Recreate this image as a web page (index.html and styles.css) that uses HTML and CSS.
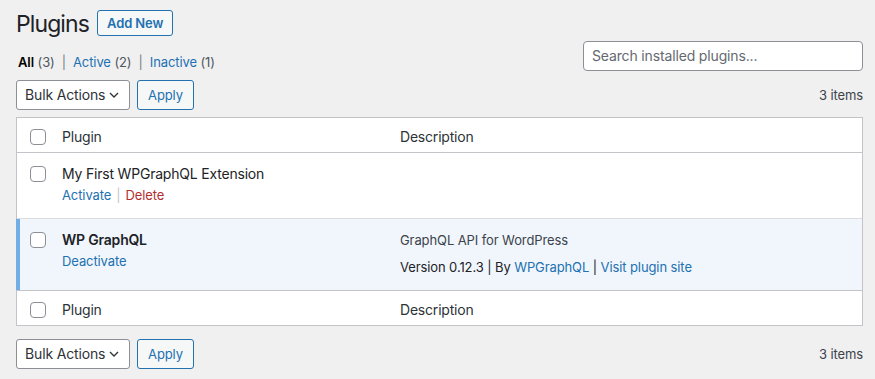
FILE: index.html
```html
<!DOCTYPE html>
<html lang="en">
<head>
    <meta charset="UTF-8">
    <meta name="viewport" content="width=device-width, initial-scale=1.0">
    <title>Plugins</title>
    <link rel="stylesheet" href="styles.css">
</head>
<body>
    <div class="wrap">
        <div class="page-head">
            <h1 class="page-title">Plugins</h1>
            <a class="title-action" href="#">Add New</a>
        </div>

        <div class="filter-bar">
            <ul class="subsubsub">
                <li><span class="current">All</span> <span class="count">(3)</span></li>
                <li class="sep">|</li>
                <li><a href="#">Active</a> <span class="count">(2)</span></li>
                <li class="sep">|</li>
                <li><a href="#">Inactive</a> <span class="count">(1)</span></li>
            </ul>
            <div class="search-box">Search installed plugins...</div>
        </div>

        <div class="tablenav">
            <div class="bulk">
                <div class="select">
                    <span>Bulk Actions</span>
                    <svg width="10" height="6" viewBox="0 0 10 6"><polyline points="1,1 5,5 9,1" fill="none" stroke="#2c3338" stroke-width="1.3"/></svg>
                </div>
                <button class="button">Apply</button>
            </div>
            <div class="num-items">3 items</div>
        </div>

        <div class="plugin-table">
            <div class="row head">
                <div class="check"><span class="checkbox"></span></div>
                <div class="col">Plugin</div>
                <div class="col">Description</div>
            </div>

            <div class="row plugin inactive">
                <div class="check"><span class="checkbox"></span></div>
                <div class="col title">
                    <div class="name">My First WPGraphQL Extension</div>
                    <div class="row-actions">
                        <a href="#">Activate</a><span class="bar">|</span><a class="delete" href="#">Delete</a>
                    </div>
                </div>
                <div class="col desc"></div>
            </div>

            <div class="row plugin active">
                <div class="check"><span class="checkbox"></span></div>
                <div class="col title">
                    <div class="name">WP GraphQL</div>
                    <div class="row-actions">
                        <a href="#">Deactivate</a>
                    </div>
                </div>
                <div class="col desc">
                    <p>GraphQL API for WordPress</p>
                    <p class="meta">Version 0.12.3 | By <a href="#">WPGraphQL</a> | <a href="#">Visit plugin site</a></p>
                </div>
            </div>

            <div class="row head foot">
                <div class="check"><span class="checkbox"></span></div>
                <div class="col">Plugin</div>
                <div class="col">Description</div>
            </div>
        </div>

        <div class="tablenav bottom">
            <div class="bulk">
                <div class="select">
                    <span>Bulk Actions</span>
                    <svg width="10" height="6" viewBox="0 0 10 6"><polyline points="1,1 5,5 9,1" fill="none" stroke="#2c3338" stroke-width="1.3"/></svg>
                </div>
                <button class="button">Apply</button>
            </div>
            <div class="num-items">3 items</div>
        </div>
    </div>
</body>
</html>
```

FILE: styles.css
```css
* {
    margin: 0;
    padding: 0;
    box-sizing: border-box;
}

body {
    font-family: Inter, "Noto Sans", sans-serif;
    font-size: 13px;
    line-height: 1.4;
    letter-spacing: -0.1px;
    background: #f0f0f1;
    color: #3c434a;
}

a {
    color: #2271b1;
    text-decoration: none;
}

.wrap {
    padding: 10px 12px 0 16px;
}

.page-head {
    display: flex;
    align-items: center;
    gap: 8px;
    height: 26px;
}

.page-title {
    font-size: 23px;
    font-weight: 400;
    letter-spacing: -0.9px;
    color: #1d2327;
    line-height: 26px;
    padding-top: 1px;
}

.title-action {
    display: inline-block;
    border: 1px solid #2271b1;
    border-radius: 3px;
    background: #f6f7f7;
    padding: 0 9px;
    height: 26px;
    line-height: 24px;
    font-weight: 600;
    font-size: 13px;
}

.filter-bar {
    display: flex;
    justify-content: space-between;
    margin-top: 5px;
}

.subsubsub {
    list-style: none;
    display: flex;
    padding: 12px 0 0 2px;
    line-height: 18px;
    color: #50575e;
}

.subsubsub .current {
    color: #000;
    font-weight: 600;
}

.subsubsub .sep {
    margin: 0 7px;
    color: #787c82;
}

.search-box {
    width: 280px;
    height: 30px;
    border: 1px solid #8c8f94;
    border-radius: 4px;
    background: #fff;
    padding: 0 8px;
    line-height: 28px;
    font-size: 14px;
    letter-spacing: -0.15px;
    color: #646970;
}

.tablenav {
    display: flex;
    justify-content: space-between;
    align-items: center;
    margin-top: 9px;
    height: 30px;
}

.tablenav.bottom {
    margin-top: 13px;
}

.bulk {
    display: flex;
    gap: 7px;
}

.select {
    width: 114px;
    height: 30px;
    border: 1px solid #8c8f94;
    border-radius: 3px;
    background: #fff;
    display: flex;
    align-items: center;
    justify-content: space-between;
    padding: 0 10px 0 8px;
    font-size: 14px;
    letter-spacing: -0.15px;
    color: #2c3338;
}

.button {
    font-family: inherit;
    font-size: 13px;
    letter-spacing: -0.1px;
    height: 30px;
    width: 57px;
    border: 1px solid #2271b1;
    border-radius: 3px;
    background: #f6f7f7;
    color: #2271b1;
}

.num-items {
    color: #3c434a;
}

.plugin-table {
    margin-top: 7px;
    border: 1px solid #c3c4c7;
    background: #fff;
}

.row {
    display: grid;
    grid-template-columns: 35px 338px 1fr;
}

.row.head {
    height: 35px;
    padding-top: 3px;
    align-items: center;
    border-bottom: 1px solid #c3c4c7;
    color: #2c3338;
    font-size: 14px;
    letter-spacing: -0.2px;
}

.row.foot {
    border-bottom: none;
}

.check {
    padding-left: 13px;
    display: flex;
}

.plugin .check {
    padding-top: 13px;
}

.checkbox {
    width: 16px;
    height: 16px;
    border: 1px solid #8c8f94;
    border-radius: 4px;
    background: #fff;
}

.col {
    padding: 0 10px;
}

.plugin .col {
    padding: 11px 10px 13px;
}

.plugin.inactive {
    border-bottom: 1px solid #dcdcde;
}

.plugin.active {
    background: #f0f6fc;
    border-left: 4px solid #72aee6;
    margin-left: -1px;
    grid-template-columns: 32px 338px 1fr;
}

.plugin.active .check {
    padding-left: 10px;
}

.plugin.active + .foot {
    border-top: 1px solid #c3c4c7;
}

.name {
    font-size: 14px;
    letter-spacing: -0.2px;
    line-height: 20px;
    color: #1d2327;
}

.active .name {
    font-weight: 600;
}

.row-actions {
    margin-top: 1px;
    line-height: 20px;
}

.row-actions .bar {
    color: #c3c4c7;
    margin: 0 5px;
}

.row-actions .delete {
    color: #b32d2e;
}

.desc p {
    line-height: 20px;
}

.desc .meta {
    margin-top: 7px;
    color: #1d2327;
}
```
